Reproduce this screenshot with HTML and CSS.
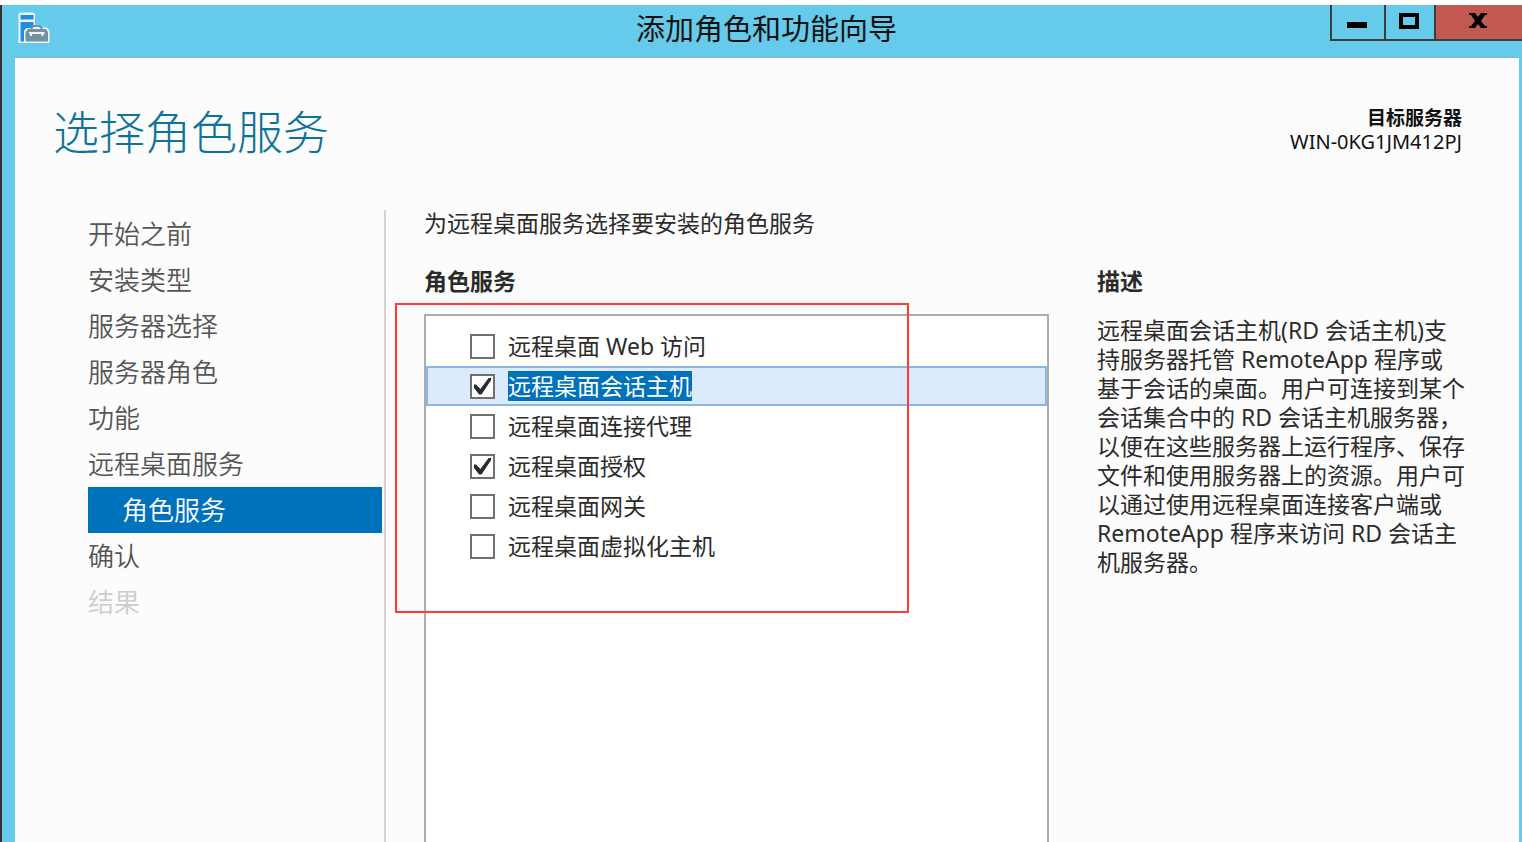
FILE: index.html
```html
<!DOCTYPE html>
<html lang="zh-CN">
<head>
<meta charset="UTF-8">
<meta name="viewport" content="width=device-width, initial-scale=1.0">
<title>添加角色和功能向导</title>
<link rel="stylesheet" href="styles.css">
</head>
<body>
    <div class="window">
        <header class="titlebar">
            <svg class="app-icon" width="32" height="32" viewBox="0 0 32 32">
                <path d="M2 .5h13.500l1.500 1.500v11h4l2 2.500h6l2.500 3V31H.5V2z" fill="#eef8fc"/>
                <path d="M2.500 3h13v4.500h-13zM2.500 10h13v3l-2.500 3H8l-2 3v10.500H2.500z" fill="#1f8ddd"/>
                <path d="M13.500 17.500V16l2-2h6l2 2v1.500" fill="none" stroke="#7391a6" stroke-width="2"/>
                <path d="M10 17h18l2 3v9.500H7.500V20z" fill="#7391a6"/>
                <path d="M11 21h15.500M13 21v3M24.500 21v3" fill="none" stroke="#eef8fc" stroke-width="2"/>
            </svg>
            <span class="title">添加角色和功能向导</span>
            <div class="controls">
                <button type="button" class="minimize" aria-label="最小化">
                    <svg width="20" height="20" viewBox="0 0 20 20"><path d="M0 11h20v6H0z"/></svg>
                </button>
                <button type="button" class="maximize" aria-label="最大化">
                    <svg width="20" height="20" viewBox="0 0 20 20"><path d="M0 2h20v16H0zM4 6v8h12V6z" fill-rule="evenodd"/></svg>
                </button>
                <button type="button" class="close" aria-label="关闭">
                    <svg width="20" height="20" viewBox="0 0 20 20"><path d="M1 2h6l3 4 3-4h6v2h-2l-4 6 4 5h2v2h-6l-3-4-3 4H1v-2h2l4-5-4-6H1z"/></svg>
                </button>
            </div>
        </header>

        <div class="content">
            <div class="page-head">
                <h1>选择角色服务</h1>
                <div class="server">
                    <strong>目标服务器</strong>
                    <span>WIN-0KG1JM412PJ</span>
                </div>
            </div>

            <div class="columns">
                <nav class="steps">
                    <a href="#">开始之前</a>
                    <a href="#">安装类型</a>
                    <a href="#">服务器选择</a>
                    <a href="#">服务器角色</a>
                    <a href="#">功能</a>
                    <a href="#">远程桌面服务</a>
                    <a href="#" class="current" aria-current="step">角色服务</a>
                    <a href="#">确认</a>
                    <a href="#" class="disabled" aria-disabled="true">结果</a>
                </nav>

                <main class="roles">
                    <p class="intro">为远程桌面服务选择要安装的角色服务</p>
                    <h2>角色服务</h2>
                    <div class="role-list">
                        <div class="role">
                            <input type="checkbox" id="web">
                            <label for="web">远程桌面 Web 访问</label>
                        </div>
                        <div class="role selected">
                            <input type="checkbox" id="host" checked>
                            <label for="host">远程桌面会话主机</label>
                        </div>
                        <div class="role">
                            <input type="checkbox" id="broker">
                            <label for="broker">远程桌面连接代理</label>
                        </div>
                        <div class="role">
                            <input type="checkbox" id="licensing" checked>
                            <label for="licensing">远程桌面授权</label>
                        </div>
                        <div class="role">
                            <input type="checkbox" id="gateway">
                            <label for="gateway">远程桌面网关</label>
                        </div>
                        <div class="role">
                            <input type="checkbox" id="virtual">
                            <label for="virtual">远程桌面虚拟化主机</label>
                        </div>
                        <div class="marker"></div>
                    </div>
                </main>

                <aside class="description">
                    <h2>描述</h2>
                    <p>远程桌面会话主机(RD 会话主机)支<br>
                    持服务器托管 RemoteApp 程序或<br>
                    基于会话的桌面。用户可连接到某个<br>
                    会话集合中的 RD 会话主机服务器，<br>
                    以便在这些服务器上运行程序、保存<br>
                    文件和使用服务器上的资源。用户可<br>
                    以通过使用远程桌面连接客户端或<br>
                    RemoteApp 程序来访问 RD 会话主<br>
                    机服务器。</p>
                </aside>
            </div>
        </div>
    </div>
</body>
</html>
```
FILE: styles.css
```css
* {
    box-sizing: border-box;
}

body {
    margin: 0;
    padding-top: 5px;
    background: #fff;
    font-family: "Noto Sans", "Noto Sans CJK SC", sans-serif;
    font-size: 23px;
    color: #2b2b2b;
}

h1, h2, p {
    margin: 0;
}

.window {
    display: flex;
    flex-direction: column;
    min-height: calc(100vh - 5px);
    border-left: 2px solid #333;
    background: #66caea;
}

/* title bar */
.titlebar {
    display: grid;
    grid-template-columns: 1fr auto 1fr;
    height: 52px;
    padding-left: 9px;
}

.app-icon {
    margin: 7px 0 0 7px;
}

.title {
    font-size: 29px;
    line-height: 48px;
    color: #111;
}

.controls {
    display: flex;
    justify-self: end;
    height: 36px;
}

.controls button {
    display: flex;
    justify-content: center;
    align-items: center;
    width: 50px;
    padding: 0 2px 2px 0;
    border: 0 solid #3c3c3c;
    border-width: 0 0 2px 2px;
    background: #66caea;
}

.controls .minimize {
    width: 54px;
}

.controls .close {
    width: 88px;
    background: #c25a51;
}

/* wizard page */
.content {
    flex: 1;
    display: flex;
    flex-direction: column;
    margin: 0 3px 0 13px;
    border-top: 1px solid #86b1c6;
    background: #fcfcfc;
}

.page-head {
    display: flex;
    justify-content: space-between;
    height: 152px;
    padding: 42px 57px 0 38px;
}

h1 {
    font-size: 46px;
    font-weight: 300;
    line-height: 62px;
    color: #0f7399;
}

.server {
    padding-top: 6px;
    line-height: 24px;
    text-align: right;
    color: #111;
}

.server strong,
.server span {
    display: block;
}

.server strong {
    font-size: 19px;
}

.server span {
    font-size: 20px;
}

.columns {
    flex: 1;
    display: grid;
    grid-template-columns: 298px 1fr 372px;
    padding: 0 50px 0 73px;
}

.steps {
    padding: 1px 2px 0 0;
    border-right: 2px solid #d4d4d4;
    font-size: 26px;
    font-weight: 350;
}

.steps a {
    display: block;
    line-height: 46px;
    color: #555;
    text-decoration: none;
}

.steps .current {
    padding-left: 34px;
    background: #0072bc;
    color: #fff;
}

.steps .disabled {
    color: #ccc;
}

.roles {
    display: flex;
    flex-direction: column;
    margin: 0 48px 0 38px;
}

.intro {
    line-height: 26px;
}

h2 {
    margin: 30px 0 18px;
    font-size: 23px;
    line-height: 30px;
}

.role-list {
    flex: 1;
    position: relative;
    padding-top: 10px;
    border: 2px solid #acacac;
    border-bottom: none;
    background: #fff;
}

.role {
    display: flex;
    align-items: center;
    gap: 13px;
    height: 40px;
    padding-left: 43px;
    border: 1px solid transparent;
}

.role label {
    line-height: 30px;
}

.role input {
    appearance: none;
    display: grid;
    place-items: center;
    width: 25px;
    height: 25px;
    margin: 0;
    border: 2px solid #707070;
    background: #fff;
}

.role input:checked::after {
    content: "";
    width: 17px;
    height: 17px;
    background: #2b2b2b;
    clip-path: polygon(0 41%, 12% 41%, 38% 68%, 88% 0, 100% 0, 100% 16%, 44% 100%, 30% 100%, 0 62%);
}

.role.selected {
    border: 2px solid #8db5e3;
    padding-left: 42px;
    background: #dbeafd;
}

.role.selected label {
    background: #0072bc;
    color: #fff;
}

/* red frame drawn over the list */
.marker {
    position: absolute;
    top: -13px;
    left: -31px;
    width: 514px;
    height: 310px;
    border: 2px solid #ff3b34;
    pointer-events: none;
}

.description h2 {
    margin: 56px 0 20px;
}

.description p {
    line-height: 29px;
    white-space: nowrap;
}
```
